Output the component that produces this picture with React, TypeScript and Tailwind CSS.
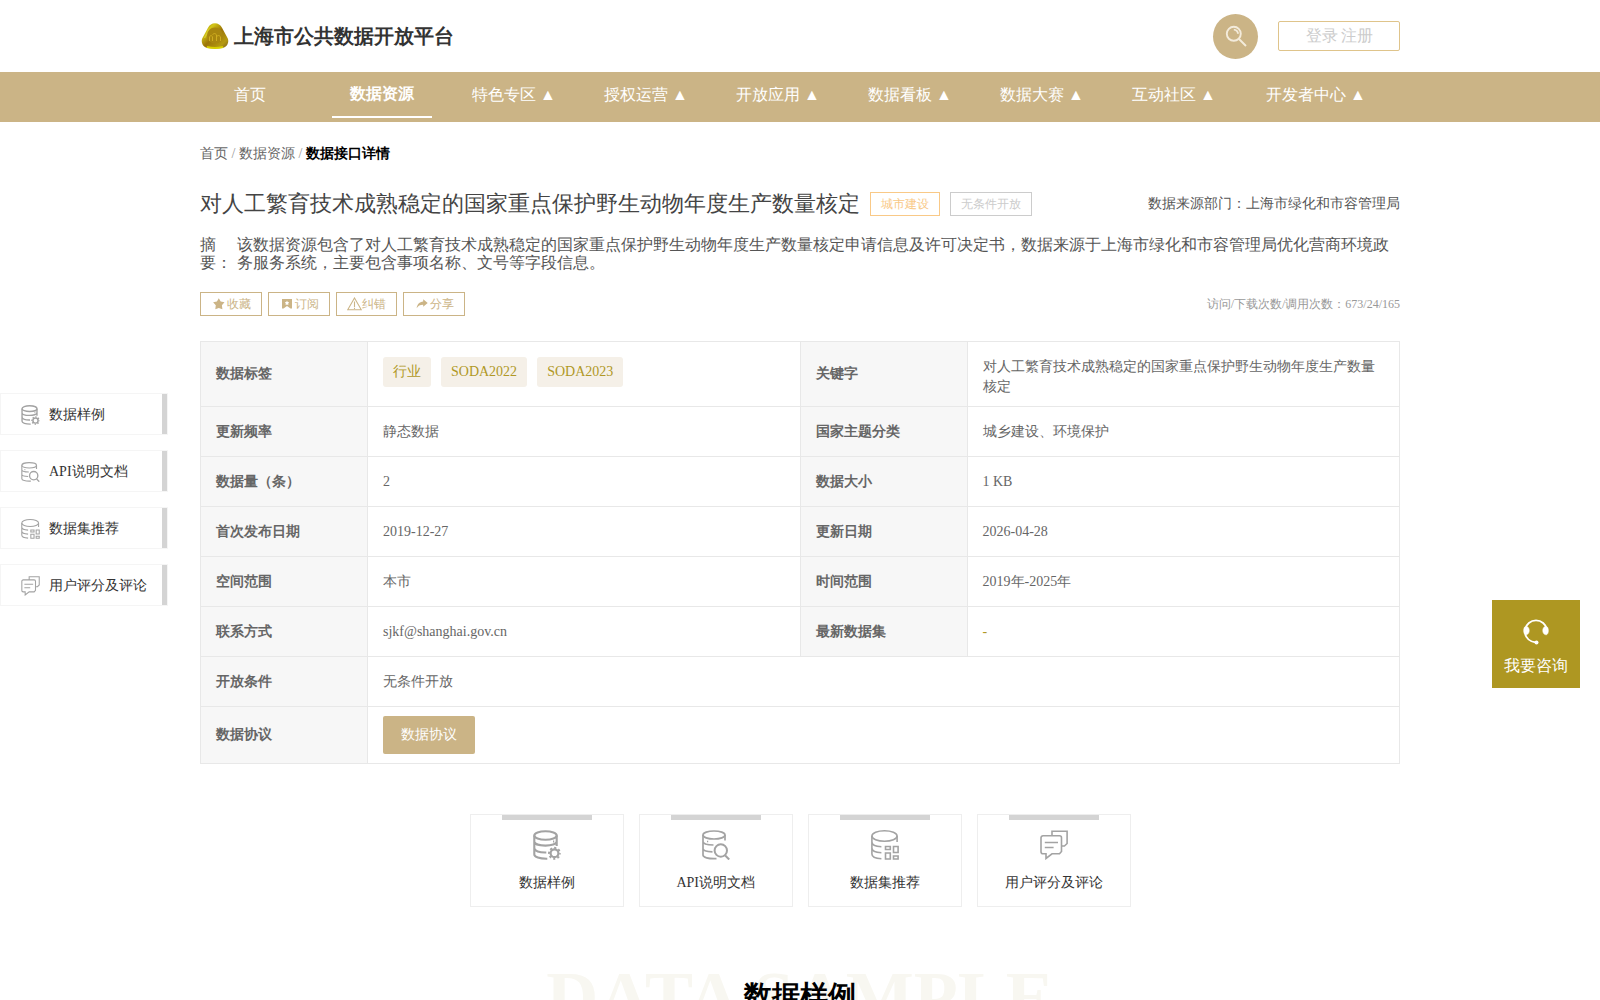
import React from "react";

const navItems = ["特色专区", "授权运营", "开放应用", "数据看板", "数据大赛", "互动社区"];

type IconProps = { className?: string };

function SampleIcon({ className }: IconProps) {
  return (
    <svg className={className} viewBox="0 0 28 30" fill="none" stroke="#a3a3a3" strokeWidth="2.1">
      <ellipse cx="12.5" cy="5.5" rx="11.2" ry="4.3" />
      <path d="M1.3 5.5V24.5c0 2.5 5 4.3 13 4.2M23.7 5.5V16M1.3 11.5c0 5.5 22.4 5.5 22.4 0M1.3 18c0 3 5 4.7 12 4.5" />
      <circle cx="21.5" cy="23.3" r="3.9" strokeWidth="2.2" />
      <circle cx="21.5" cy="23.3" r="5.5" strokeWidth="1.9" strokeDasharray="2.1 2.22" strokeDashoffset="1" />
      <path d="M20 11.5h1.2" />
    </svg>
  );
}

function ApiIcon({ className }: IconProps) {
  return (
    <svg className={className} viewBox="0 0 28 30" fill="none" stroke="#a3a3a3" strokeWidth="1.7">
      <ellipse cx="12" cy="5" rx="11" ry="4" />
      <path d="M1 5V25c0 2.3 5 4 13.5 3.6M23 5v5.5M1 11.5c0 2 4 3.4 10.5 3.5M1 18.500c0 2 4 3.200 9.500 3.300M5 11.500h1.200" />
      <circle cx="18.800" cy="20.500" r="6.200" strokeWidth="2" />
      <path d="M23.200 25.500l4 4" strokeWidth="2" />
    </svg>
  );
}

function RecommendIcon({ className }: IconProps) {
  return (
    <svg className={className} viewBox="0 0 28 30" fill="none" stroke="#a3a3a3" strokeWidth="1.6">
      <ellipse cx="13.500" cy="6" rx="12.600" ry="5.200" />
      <path d="M.9 6V24c0 2.500 3.500 4.500 9.500 4.700M26.100 6v6M.9 12c0 2.500 3.500 4.500 9.500 4.700M.9 18c0 2.500 3.500 4.500 9.500 4.700" />
      <path d="M14.500 16.500h4.800v3h-4.800zM22.500 16.500h4.600v6h-4.600zM14.500 23h4.800v6h-4.800zM22.500 26h4.600v3h-4.600z" />
    </svg>
  );
}

function CommentIcon({ className }: IconProps) {
  return (
    <svg className={className} viewBox="0 0 28 30" fill="none" stroke="#a3a3a3" strokeWidth="1.6">
      <path d="M12 5V1.200h15.100V13.500l-2.700 2.500h-2.500M3 5.800h16.500a2 2 0 0 1 2 2V21.500l-2 2.300h-7.500l-6 4.700v-4.700H3a2 2 0 0 1-2-2V7.800a2 2 0 0 1 2-2zM4.800 12.500h13.200M4.800 17.500h8.800" />
    </svg>
  );
}

const sections = [
  { label: "数据样例", Icon: SampleIcon },
  { label: "API说明文档", Icon: ApiIcon },
  { label: "数据集推荐", Icon: RecommendIcon },
  { label: "用户评分及评论", Icon: CommentIcon },
];

function StarIcon() {
  return (
    <svg className="mx-[2px] h-3 w-3" viewBox="0 0 12 12" fill="#cbb486">
      <path d="M5.800 .3l1.900 3.300 3.800.7-2.600 2.900.5 4L5.800 9.900l-3.500 1.300.5-4L.1 4.300l3.800-.7z" />
    </svg>
  );
}

function SubscribeIcon() {
  return (
    <svg className="mx-[2px] h-3 w-3" viewBox="0 0 12 12" fill="#cbb486">
      <path fillRule="evenodd" d="M1 1h10v9.500H9.500L6 8l-3.500 2.500H1zM6 2.500L5.300 4 3.800 4.300l1 1.200-.2 1.600L6 6.400l1.400.7-.2-1.600 1-1.200L6.700 4z" />
    </svg>
  );
}

function WarnIcon() {
  return (
    <svg className="h-[14px] w-[15px]" viewBox="0 0 15 14" fill="none" stroke="#cbb486" strokeWidth="1.1">
      <path d="M7.500 1L14.300 12.800H.7zM7.500 4.500v5.500M7.500 10.800v1.100" />
    </svg>
  );
}

function ShareIcon() {
  return (
    <svg className="mx-[2px] h-3 w-3" viewBox="0 0 12 12" fill="#cbb486">
      <path d="M7.200 1.200L11.700 5 7.200 8.800V6.700C4 6.700 2 7.800.7 10.200 1 6.500 3.500 3.800 7.200 3.500z" />
    </svg>
  );
}

const actions = [
  { label: "收藏", Icon: StarIcon, w: "w-[62px]" },
  { label: "订阅", Icon: SubscribeIcon, w: "w-[62px]" },
  { label: "纠错", Icon: WarnIcon, w: "w-[61px]" },
  { label: "分享", Icon: ShareIcon, w: "w-[62px]" },
];

const rows = [
  ["更新频率", "静态数据", "国家主题分类", "城乡建设、环境保护"],
  ["数据量（条）", "2", "数据大小", "1 KB"],
  ["首次发布日期", "2019-12-27", "更新日期", "2026-04-28"],
  ["空间范围", "本市", "时间范围", "2019年-2025年"],
  ["联系方式", "sjkf@shanghai.gov.cn", "最新数据集", "-"],
];

function Label({ children }: { children: React.ReactNode }) {
  return (
    <th className="w-[167px] border border-[#e8e8e8] bg-[#f7f7f7] px-[15px] py-0 text-left font-bold">{children}</th>
  );
}

function Value({ children, span, gold }: { children: React.ReactNode; span?: number; gold?: boolean }) {
  return (
    <td
      colSpan={span}
      className={gold ? "border border-[#e8e8e8] px-[15px] py-0 text-[#b09826]" : "border border-[#e8e8e8] px-[15px] py-0"}
    >
      {children}
    </td>
  );
}

function Logo() {
  return (
    <svg className="h-[26px] w-7" viewBox="0 0 28 26">
      <defs>
        <linearGradient id="gold" x1="0" y1="0" x2="1" y2="1">
          <stop offset="0" stopColor="#8a6d10" />
          <stop offset="0.250" stopColor="#d3c617" />
          <stop offset="0.500" stopColor="#9b7408" />
          <stop offset="0.800" stopColor="#b59a10" />
          <stop offset="1" stopColor="#7a5a20" />
        </linearGradient>
      </defs>
      <path d="M14 .3c3 0 5.500 1.500 7 4.500l5.800 10.700c1.500 4-.8 8.500-5 9.500-5 .6-10.600.6-15.600 0C2 24-.3 19.500 1.200 15.500L7 4.800C8.500 1.800 11 .3 14 .3z" fill="url(#gold)" />
      <path d="M6 24c5 1.200 11 1.200 16 0" stroke="#d8d000" strokeWidth="2" fill="none" />
      <path d="M8.500 6c-2 3-3.500 6-5 9" stroke="#d6ca2a" strokeWidth="1.500" fill="none" />
      <circle cx="14" cy="12.500" r="8" fill="#a8860f" />
      <path d="M8.500 18v-4c1-2 2-2 3 0v4m0-6c1-2 3-2 4 0v6m0-4c1-2 3-2 4 0v4" stroke="#cfad20" strokeWidth="1" fill="none" />
    </svg>
  );
}

export default function App() {
  return (
    <div className="relative h-[1000px] w-[1600px] overflow-hidden bg-white font-['Liberation_Serif',serif] text-[14px] leading-5 text-[#666]">
      <header className="mx-auto flex h-[72px] w-[1200px] items-center">
        <div className="flex items-center gap-[5px] pl-[1px]">
          <Logo />
          <h1 className="text-[20px] font-bold leading-6 text-[#333]">上海市公共数据开放平台</h1>
        </div>
        <button className="ml-auto flex size-[45px] items-center justify-center rounded-full bg-[#cbb486]">
          <svg className="size-[22px]" viewBox="0 0 22 22" fill="none" stroke="#f3ebdb" strokeWidth="1.900">
            <circle cx="8.800" cy="8.800" r="7" />
            <path d="M14 14l7 7M8.800 4.600a4.200 4.200 0 0 1 4.200 4.200" />
          </svg>
        </button>
        <button className="ml-5 flex h-[30px] w-[122px] items-center justify-center gap-[3px] rounded-[2px] border border-[#dfc48b] pl-[1px] text-[16px] text-[#ccc]">
          <span>登录</span>
          <span>注册</span>
        </button>
      </header>

      <nav className="h-[50px] bg-[#cbb486] text-[16px] text-white">
        <div className="mx-auto flex w-[1232px] leading-[46px]">
          <a className="w-[132px] text-center">首页</a>
          <a className="mx-4 h-[46px] w-[100px] border-b-2 border-white text-center font-bold leading-[44px]">数据资源</a>
          {navItems.map((item) => (
            <a key={item} className="w-[132px] pl-6">{item} ▲</a>
          ))}
          <a className="w-[132px] whitespace-nowrap pl-[26px]">开发者中心 ▲</a>
        </div>
      </nav>

      <main className="mx-auto w-[1200px]">
        <div className="h-[62px] pt-[1px] leading-[62px]">
          首页 <span className="text-[#999]">/</span> 数据资源 <span className="text-[#999]">/</span>{" "}
          <b className="text-black">数据接口详情</b>
        </div>

        <div className="flex h-10 items-center">
          <h2 className="text-[22px] leading-7 text-[#444]">对人工繁育技术成熟稳定的国家重点保护野生动物年度生产数量核定</h2>
          <span className="ml-[10px] h-6 border border-[#f9c987] px-[10px] text-[12px] leading-[22px] text-[#f9c987]">城市建设</span>
          <span className="ml-[10px] h-6 border border-[#ccc] px-[10px] text-[12px] leading-[22px] text-[#ccc]">无条件开放</span>
          <span className="ml-auto text-[#555]">数据来源部门：上海市绿化和市容管理局</span>
        </div>

        <div className="mt-3 flex text-[16px] leading-[18px] text-[#555]">
          <span className="w-[37px] shrink-0">摘<br />要：</span>
          <p className="flex-1">
            该数据资源包含了对人工繁育技术成熟稳定的国家重点保护野生动物年度生产数量核定申请信息及许可决定书，数据来源于上海市绿化和市容管理局优化营商环境政务服务系统，主要包含事项名称、文号等字段信息。
          </p>
        </div>

        <div className="mt-5 flex h-6 items-center gap-[6px] text-[12px]">
          {actions.map(({ label, Icon, w }) => (
            <button key={label} className={`${w} flex h-6 items-center justify-center border border-[#cbb486] leading-[22px] text-[#cbb486]`}>
              <Icon />
              {label}
            </button>
          ))}
          <span className="ml-auto text-[#999]">访问/下载次数/调用次数：673/24/165</span>
        </div>

        <table className="mt-[25px] w-[1200px] table-fixed border-collapse">
          <tbody>
            <tr className="h-[65px]">
              <Label>数据标签</Label>
              <td className="border border-[#e8e8e8] px-[15px] py-0">
                <div className="mb-[5px] flex gap-[10px] leading-[29px] text-[#b09826]">
                  {["行业", "SODA2022", "SODA2023"].map((tag) => (
                    <span key={tag} className="h-[30px] rounded-[3px] bg-[#f5f0e8] px-[10px]">{tag}</span>
                  ))}
                </div>
              </td>
              <Label>关键字</Label>
              <Value>
                <p className="pt-[6px]">对人工繁育技术成熟稳定的国家重点保护野生动物年度生产数量核定</p>
              </Value>
            </tr>
            {rows.map(([a, b, c, d]) => (
              <tr key={a} className="h-[50px]">
                <Label>{a}</Label>
                <Value>{b}</Value>
                <Label>{c}</Label>
                <Value gold={d === "-"}>{d}</Value>
              </tr>
            ))}
            <tr className="h-[50px]">
              <Label>开放条件</Label>
              <Value span={3}>无条件开放</Value>
            </tr>
            <tr className="h-[57px]">
              <Label>数据协议</Label>
              <Value span={3}>
                <button className="block h-[38px] w-[92px] rounded-[2px] bg-[#cbb486] text-white">数据协议</button>
              </Value>
            </tr>
          </tbody>
        </table>

        <div className="mt-[50px] flex justify-center gap-[15px]">
          {sections.map(({ label, Icon }) => (
            <div key={label} className="flex h-[93px] w-[154px] flex-col items-center border border-[#eee] text-[#333]">
              <div className="h-[5px] w-[90px] bg-[#d4d4d4]" />
              <Icon className="mt-[10px] h-[30px] w-7" />
              <span className="mt-[13px] pl-[0.5px]">{label}</span>
            </div>
          ))}
        </div>

        <div className="relative mt-[50px] h-20">
          <div className="text-center text-[72px] font-bold leading-[80px] text-[#f8f7f1]">DATA SAMPLE</div>
          <h3 className="absolute inset-x-0 top-[19px] text-center text-[28px] font-bold leading-10 text-black">数据样例</h3>
        </div>
      </main>

      <aside className="absolute left-0 top-[393px] flex flex-col gap-[15px]">
        {sections.map(({ label, Icon }) => (
          <div key={label} className="flex h-[42px] w-[168px] items-center border border-[#f5f5f5] bg-white pl-5 text-[#333]">
            <Icon className="mt-[2px] h-5 w-[19px]" />
            <span className="ml-[9px] mt-[2px]">{label}</span>
            <i className="ml-auto h-10 w-[5px] bg-[#d4d4d4]" />
          </div>
        ))}
      </aside>

      <div className="absolute left-[1492px] top-[600px] flex size-[88px] flex-col items-center bg-[#ae9722] text-[16px] text-white">
        <svg className="mt-[17px] h-7 w-[27px]" viewBox="0 0 27 28" fill="none" stroke="white" strokeWidth="1.8">
          <path d="M2 12.500a11.200 11.200 0 0 1 22 0M2 16c.8 5 4.800 9 11 9.500" />
          <path d="M2.500 9.500c5-.8 5 9 0 8.200-2.500-.6-2.500-7.600 0-8.200zM23.500 9.500c-5-.8-5 9 0 8.200 2.500-.6 2.500-7.600 0-8.200z" fill="white" strokeWidth=".5" />
          <circle cx="13.500" cy="25.500" r="2" fill="white" stroke="none" />
        </svg>
        <span className="mt-[11px]">我要咨询</span>
      </div>
    </div>
  );
}
